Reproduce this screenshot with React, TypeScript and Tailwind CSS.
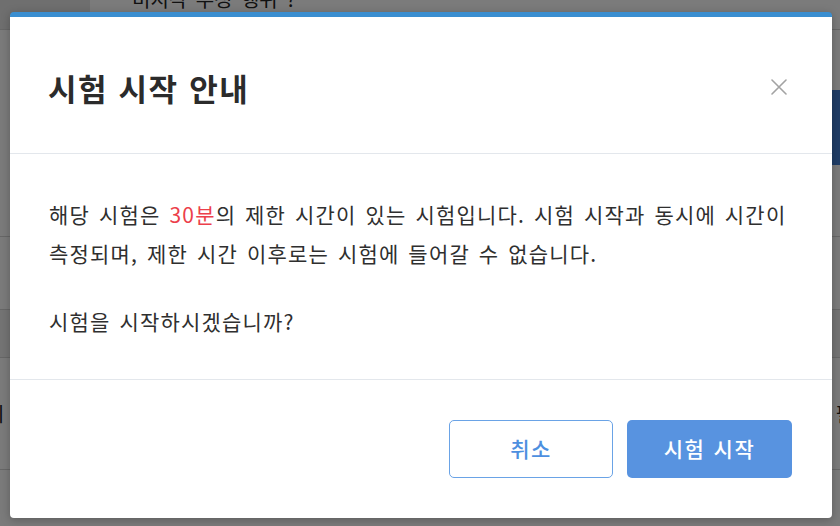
// Page rows that sit behind the dimmed overlay.
function BackgroundPage() {
  return (
    <div className="flex h-full w-full flex-col bg-[#f6f6f6] text-[#222]">
      <div className="flex h-[30px] shrink-0 overflow-hidden border-b border-[#cfcfcf]">
        <div className="h-full w-[90px] bg-[#dedede]" />
        <span className="ml-[42px] mt-[-12px] text-[20px] leading-[22px] [word-spacing:4px]">
          비지각 부정 행위 ?
        </span>
      </div>
      <div className="flex h-[207px] shrink-0 justify-end border-b border-[#cfcfcf] pt-[60px]">
        <div className="flex h-[75px] w-[30px] items-center bg-[#3e7acc] pl-[2px] text-[22px] text-white">
          V
        </div>
      </div>
      <div className="h-[73px] shrink-0 border-b border-[#cfcfcf]" />
      <div className="h-[48px] shrink-0 border-b border-[#cfcfcf] bg-[#e8e8e8]" />
      <div className="flex h-[112px] shrink-0 items-center justify-between overflow-hidden border-b border-[#cfcfcf] text-[20px]">
        <span className="ml-[-14px]">시</span>
        <span className="mr-[-14px]">필</span>
      </div>
      <div className="flex-1" />
    </div>
  );
}

function CloseIcon() {
  return (
    <svg width="16" height="16" viewBox="0 0 16 16" className="text-[#a3a3a3]">
      <path d="M1 1L15 15M15 1L1 15" stroke="currentColor" strokeWidth="1.6" strokeLinecap="round" />
    </svg>
  );
}

function ExamStartModal() {
  return (
    <div className="flex h-[506px] w-[822px] flex-col overflow-hidden rounded-[4px] border-t-[5px] border-[#3a8ed0] bg-white shadow-[0_2px_10px_rgba(0,0,0,0.25)]">
      <div className="flex h-[137px] shrink-0 items-center justify-between border-b border-[#e3e7ec] pl-[38px] pr-[45px] pt-[4px]">
        <h2 className="text-[31px] font-bold leading-none tracking-[1.5px] text-[#2b2b2b] [word-spacing:2px]">
          시험 시작 안내
        </h2>
        <CloseIcon />
      </div>
      <div className="h-[226px] shrink-0 border-b border-[#e3e7ec] pl-[39px] pt-[41px] text-[21px] leading-[39px] tracking-[1.2px] text-[#2f2f2f] [word-spacing:3px]">
        <p>
          해당 시험은 <span className="text-[#ec3f4b]">30분</span>의 제한 시간이 있는 시험입니다. 시험 시작과 동시에 시간이
          <br />
          측정되며, 제한 시간 이후로는 시험에 들어갈 수 없습니다.
        </p>
        <p className="mt-[29px]">시험을 시작하시겠습니까?</p>
      </div>
      <div className="flex flex-1 justify-end gap-[14px] pr-[40px] pt-[40px]">
        <button className="h-[58px] w-[164px] rounded-[5px] border border-[#6aa3e6] bg-white text-[21px] font-medium tracking-[1.5px] text-[#4d8fdf]">
          취소
        </button>
        <button className="h-[58px] w-[165px] rounded-[5px] bg-[#5893e0] text-[21px] font-medium tracking-[1.5px] text-white [word-spacing:2px]">
          시험 시작
        </button>
      </div>
    </div>
  );
}

export default function App() {
  return (
    <div className="relative h-[526px] w-[840px] overflow-hidden font-['Noto_Sans_CJK_KR',sans-serif]">
      <BackgroundPage />
      <div className="absolute inset-0 bg-black/50" />
      <div className="absolute left-[10px] top-[12px]">
        <ExamStartModal />
      </div>
    </div>
  );
}
